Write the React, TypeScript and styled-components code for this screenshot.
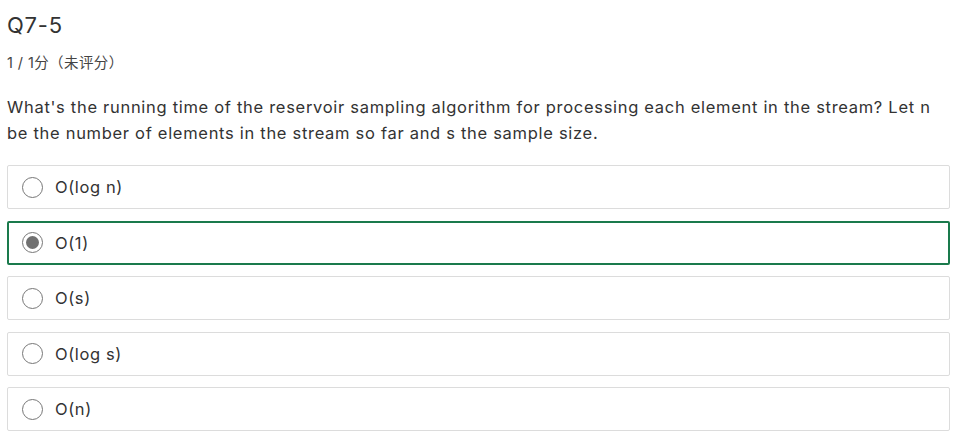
import React, { useState } from 'react'
import styled, { createGlobalStyle } from 'styled-components'

const options = ['O(log n)', 'O(1)', 'O(s)', 'O(log s)', 'O(n)']

const GlobalStyle = createGlobalStyle`
  body {
    margin: 0;
    background: #fff;
    font-family: Inter, 'Noto Sans CJK SC', sans-serif;
    color: #333;
  }
`

const App: React.FC = () => {
  const [selected, setSelected] = useState(1)

  return (
    <>
      <GlobalStyle />
      <Page>
        <Title>Q7-5</Title>
        <Score>1 / 1分（未评分）</Score>
        <Question>
          What's the running time of the reservoir sampling algorithm for
          processing each element in the stream? Let n be the number of elements
          in the stream so far and s the sample size.
        </Question>
        <OptionList>
          {options.map((opt, i) => (
            <Option key={opt} $active={i === selected} onClick={() => setSelected(i)}>
              <Radio $checked={i === selected} />
              <OptionText>{opt}</OptionText>
            </Option>
          ))}
        </OptionList>
      </Page>
    </>
  )
}

const Page = styled.div`
  width: 943px;
  padding: 11px 0 0 7px;
`

const Title = styled.h2`
  margin: 0;
  font-size: 22px;
  font-weight: 400;
  line-height: 28px;
  letter-spacing: 0.8px;
  color: #333;
`

const Score = styled.div`
  margin-top: 14px;
  font-size: 14.5px;
  line-height: 20px;
  letter-spacing: 0.4px;
  color: #444;
`

const Question = styled.p`
  margin: 21px 0 0;
  font-size: 16.5px;
  line-height: 26px;
  letter-spacing: 0.7px;
  color: #333;
`

const OptionList = styled.div`
  display: flex;
  flex-direction: column;
  gap: 11.5px;
  margin-top: 19px;
`

const Option = styled.div<{ $active: boolean }>`
  display: flex;
  align-items: center;
  box-sizing: border-box;
  height: 44px;
  padding-left: ${(p) => (p.$active ? '13px' : '14px')};
  border: ${(p) => (p.$active ? '2px solid #1a7a4c' : '1px solid #dcdcdc')};
  border-radius: 2px;
  cursor: pointer;
`

const Radio = styled.span<{ $checked: boolean }>`
  position: relative;
  box-sizing: border-box;
  width: 21px;
  height: 21px;
  border-radius: 50%;
  border: 1px solid #777;
  flex-shrink: 0;

  &::after {
    content: '';
    display: ${(p) => (p.$checked ? 'block' : 'none')};
    position: absolute;
    top: 3px;
    left: 3px;
    width: 13px;
    height: 13px;
    border-radius: 50%;
    background: #707070;
  }
`

const OptionText = styled.span`
  margin-left: 12px;
  font-size: 16.5px;
  letter-spacing: 0.6px;
  color: #333;
`

export default App
